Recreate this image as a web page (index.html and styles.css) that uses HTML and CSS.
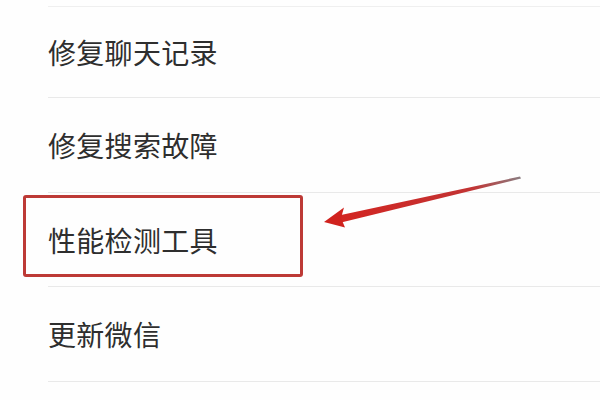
FILE: index.html
```html
<!DOCTYPE html>
<html lang="zh-CN">
<head>
<meta charset="utf-8">
<link rel="stylesheet" href="styles.css">
</head>
<body>
<div class="screen">
  <ul class="menu">
    <li class="item">修复聊天记录</li>
    <li class="item">修复搜索故障</li>
    <li class="item highlighted">性能检测工具</li>
    <li class="item">更新微信</li>
  </ul>
  <div class="mark-box"></div>
  <svg class="arrow" width="600" height="400" viewBox="0 0 600 400">
    <defs>
      <linearGradient id="shaft" x1="520" y1="177" x2="330" y2="221" gradientUnits="userSpaceOnUse">
        <stop offset="0" stop-color="#8a7c80"/>
        <stop offset="0.25" stop-color="#c23434"/>
        <stop offset="1" stop-color="#d42420"/>
      </linearGradient>
    </defs>
    <polygon points="520,176.5 521,178.5 337,223.5 334,216.5" fill="url(#shaft)"/>
    <polygon points="324,222 344,207.5 341,218 345,227.5" fill="#d0221e"/>
  </svg>
</div>
</body>
</html>
```
FILE: styles.css
```css
html, body {
  margin: 0;
  padding: 0;
  background: #ffffff;
}
.screen {
  position: relative;
  width: 600px;
  height: 400px;
  overflow: hidden;
  background: #fefefe;
}
.menu {
  list-style: none;
  margin: 0;
  padding: 7px 0 0 48px;
  border: 0;
}
.menu::before {
  content: "";
  display: block;
  height: 1px;
  background: #efefef;
  margin-top: -1px;
}
.item {
  height: 94px;
  display: flex;
  align-items: center;
  font-family: "Noto Sans CJK SC", "Noto Sans", sans-serif;
  font-size: 28px;
  color: #2e2e2e;
  border-bottom: 1px solid #e9e9e9;
  letter-spacing: 0.3px;
}
.item:nth-child(1) { height: 90px; }
.item:nth-child(2) { height: 94px; }
.item:nth-child(3) { height: 93px; }
.item:nth-child(4) { height: 94px; }
.mark-box {
  position: absolute;
  left: 23px;
  top: 195px;
  width: 274px;
  height: 76px;
  border: 3px solid #bd3a36;
  border-radius: 3px;
}
.arrow {
  position: absolute;
  left: 0;
  top: 0;
}
```
